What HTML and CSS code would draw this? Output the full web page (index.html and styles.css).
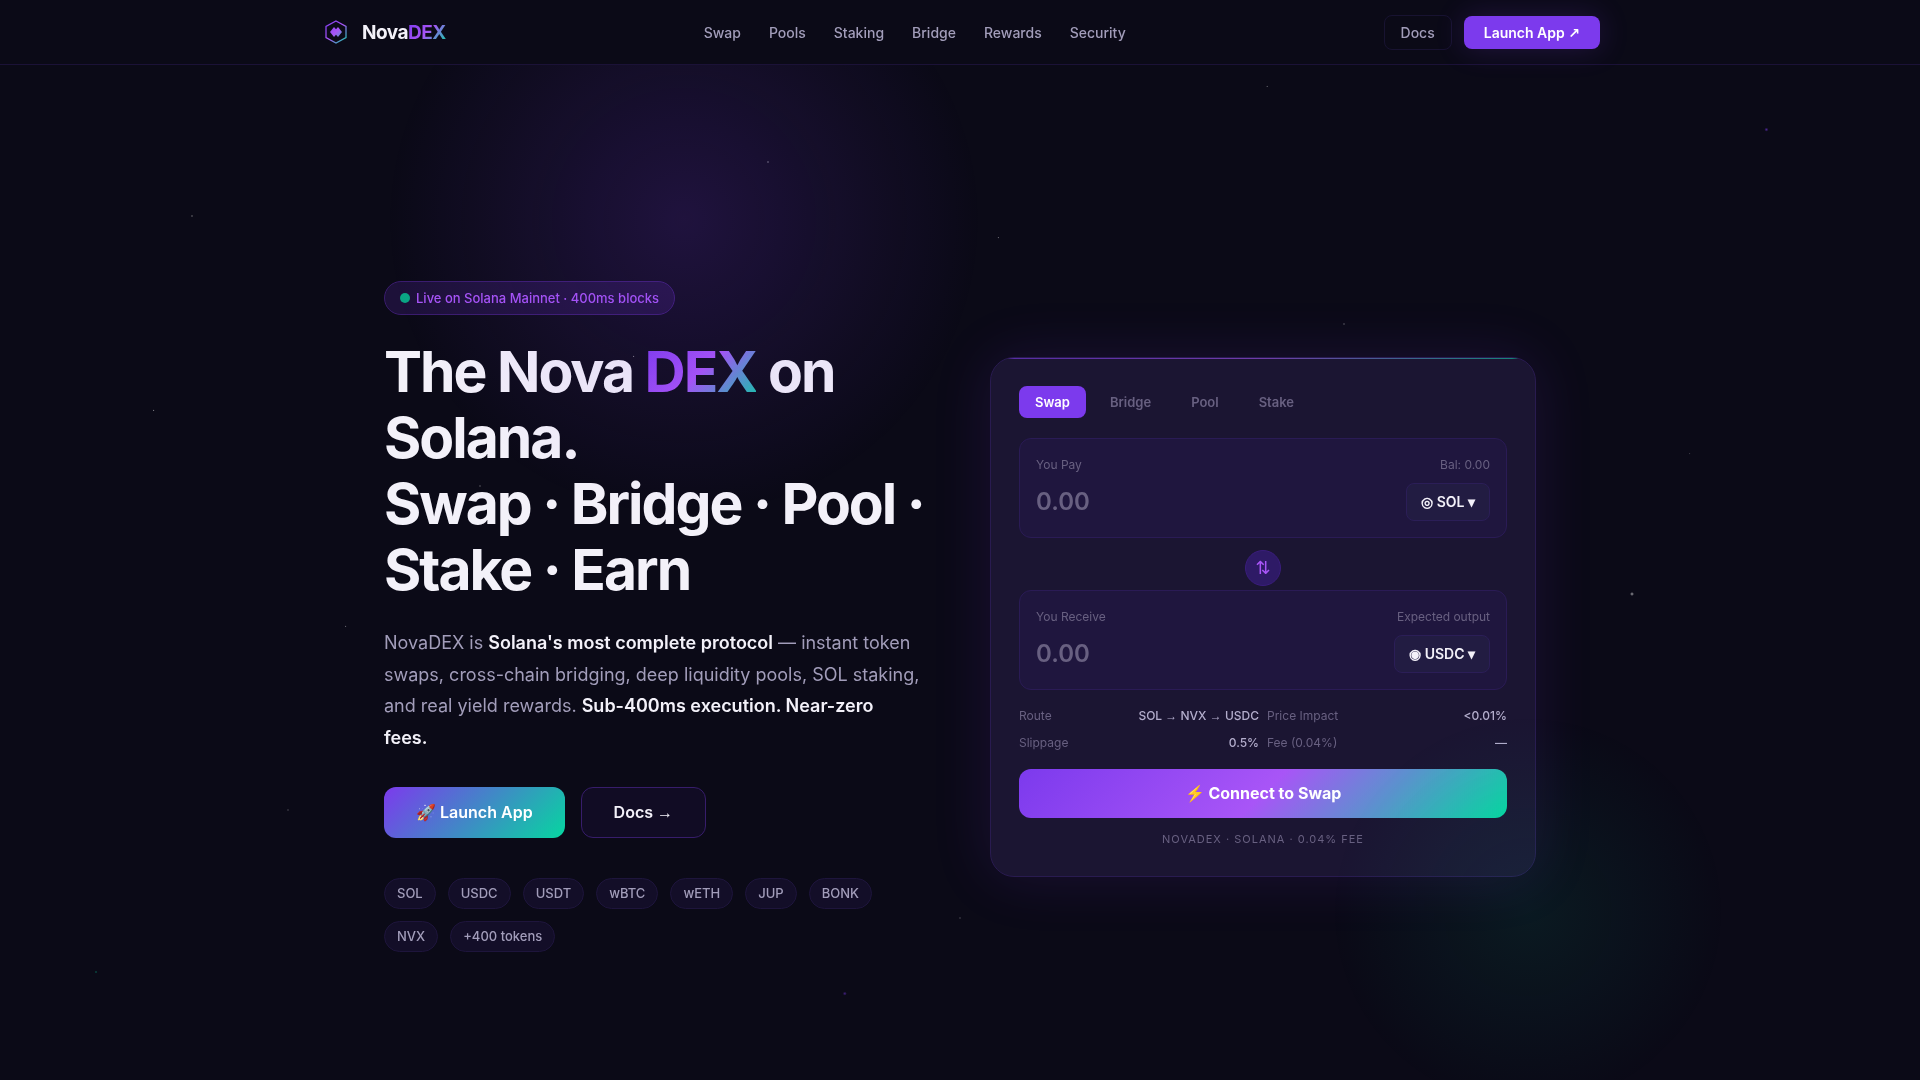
FILE: index.html
```
<!DOCTYPE html>
<html lang="en">
<head>
  <meta charset="UTF-8">
  <meta name="viewport" content="width=device-width, initial-scale=1">
  <title>NovaDEX</title>
  <link rel="stylesheet" href="styles.css">
</head>
<body>
  <!-- Background -->
  <div class="stars"></div>
  <div class="orb orb-purple"></div>
  <div class="orb orb-green"></div>

  <!-- Navigation -->
  <header class="nav">
    <div class="nav-inner">
      <a class="logo" href="#">
        <svg width="32" height="32" viewBox="0 0 32 32" fill="none" aria-hidden="true">
          <defs>
            <linearGradient id="logoGrad" x1="5" y1="5" x2="27" y2="27" gradientUnits="userSpaceOnUse">
              <stop offset="0" stop-color="#7c3aed"/>
              <stop offset="0.5" stop-color="#a855f7"/>
              <stop offset="1" stop-color="#06d6a0"/>
            </linearGradient>
          </defs>
          <path d="M16 5l10 5.500v11L16 27 6 21.500v-11z" stroke="url(#logoGrad)" stroke-width="1.300"/>
          <path d="M10 16l4-5 2 2.200 2-2.200 4 5-4 5-2-2.200-2 2.200z" fill="url(#logoGrad)"/>
        </svg>
        <span>Nova<span class="grad">DEX</span></span>
      </a>
      <nav class="nav-links">
        <a href="#swap">Swap</a>
        <a href="#pools">Pools</a>
        <a href="#staking">Staking</a>
        <a href="#bridge">Bridge</a>
        <a href="#rewards">Rewards</a>
        <a href="#security">Security</a>
      </nav>
      <div class="nav-actions">
        <a class="btn-ghost" href="#docs">Docs</a>
        <a class="btn-nav" href="#app">Launch App <span class="arrow-out">↗</span></a>
      </div>
    </div>
  </header>

  <!-- Hero -->
  <main class="hero">
    <section class="hero-copy">
      <div class="badge"><span class="dot"></span>Live on Solana Mainnet · 400ms blocks</div>
      <h1>The Nova <span class="grad">DEX</span> on Solana.<br>Swap · Bridge · Pool · Stake · Earn</h1>
      <p class="lead">NovaDEX is <strong>Solana's most complete protocol</strong> — instant token swaps, cross-chain bridging, deep liquidity pools, SOL staking, and real yield rewards. <strong>Sub-400ms execution. Near-zero<br>fees.</strong></p>
      <div class="cta">
        <a class="btn-primary" href="#app">🚀 Launch App</a>
        <a class="btn-outline" href="#docs">Docs <span class="arrow">→</span></a>
      </div>
      <ul class="tokens">
        <li>SOL</li>
        <li>USDC</li>
        <li>USDT</li>
        <li>wBTC</li>
        <li>wETH</li>
        <li>JUP</li>
        <li>BONK</li>
        <li>NVX</li>
        <li>+400 tokens</li>
      </ul>
    </section>

    <!-- Swap card -->
    <section class="card" id="swap">
      <div class="tabs">
        <button class="tab active" type="button">Swap</button>
        <button class="tab" type="button">Bridge</button>
        <button class="tab" type="button">Pool</button>
        <button class="tab" type="button">Stake</button>
      </div>
      <div class="field">
        <div class="field-top">
          <label for="pay">You Pay</label>
          <span>Bal: 0.00</span>
        </div>
        <div class="field-row">
          <input id="pay" type="text" inputmode="decimal" placeholder="0.00">
          <button class="token" type="button">◎ SOL ▾</button>
        </div>
      </div>
      <button class="flip" type="button" aria-label="Switch tokens">⇅</button>
      <div class="field">
        <div class="field-top">
          <label for="receive">You Receive</label>
          <span>Expected output</span>
        </div>
        <div class="field-row">
          <input id="receive" type="text" placeholder="0.00" readonly>
          <button class="token" type="button">◉ USDC ▾</button>
        </div>
      </div>
      <dl class="info">
        <div><dt>Route</dt><dd>SOL <span class="arrow">→</span> NVX <span class="arrow">→</span> USDC</dd></div>
        <div><dt>Price Impact</dt><dd>&lt;0.01%</dd></div>
        <div><dt>Slippage</dt><dd>0.5%</dd></div>
        <div><dt>Fee (0.04%)</dt><dd>—</dd></div>
      </dl>
      <button class="connect" type="button">⚡ Connect to Swap</button>
      <p class="card-note">NovaDEX · Solana · 0.04% fee</p>
    </section>
  </main>
</body>
</html>
```
FILE: styles.css
```
:root {
  --bg: #0b0a17;
  --purple: #7c3aed;
  --violet: #a855f7;
  --green: #06d6a0;
  --text: #f3f1f9;
  --muted: #a29dba;
  --dim: #686081;
  --grad: linear-gradient(135deg, #7c3aed 0%, #a855f7 50%, #06d6a0 100%);
}

* {
  box-sizing: border-box;
  margin: 0;
  padding: 0;
}

body {
  min-height: 100vh;
  background: var(--bg);
  color: var(--text);
  font-family: 'Inter', sans-serif;
  overflow-x: hidden;
}

a {
  color: inherit;
  text-decoration: none;
}

button,
input {
  font-family: inherit;
  border: none;
}

button {
  cursor: pointer;
}

.grad {
  background: var(--grad);
  -webkit-background-clip: text;
  background-clip: text;
  color: transparent;
}

.arrow {
  font-family: 'Liberation Sans', sans-serif;
}

.arrow-out {
  font-family: 'DejaVu Sans', sans-serif;
  line-height: 1;
}

/* Background */
.stars {
  position: fixed;
  inset: 0;
  pointer-events: none;
  background:
    radial-gradient(1px 1px at 10% 20%, rgba(255, 255, 255, 0.6), transparent),
    radial-gradient(1px 1px at 8% 38%, rgba(255, 255, 255, 0.5), transparent),
    radial-gradient(1px 1px at 40% 15%, rgba(255, 255, 255, 0.7), transparent),
    radial-gradient(1px 1px at 66% 8%, rgba(255, 255, 255, 0.4), transparent),
    radial-gradient(2px 2px at 92% 12%, rgba(124, 58, 237, 0.6), transparent),
    radial-gradient(1px 1px at 52% 22%, rgba(255, 255, 255, 0.4), transparent),
    radial-gradient(1px 1px at 70% 30%, rgba(255, 255, 255, 0.5), transparent),
    radial-gradient(1px 1px at 88% 42%, rgba(255, 255, 255, 0.2), transparent),
    radial-gradient(2px 2px at 85% 55%, rgba(255, 255, 255, 0.6), transparent),
    radial-gradient(1px 1px at 18% 58%, rgba(255, 255, 255, 0.4), transparent),
    radial-gradient(1px 1px at 15% 75%, rgba(255, 255, 255, 0.4), transparent),
    radial-gradient(1px 1px at 5% 90%, rgba(6, 214, 160, 0.7), transparent),
    radial-gradient(2px 2px at 44% 92%, rgba(124, 58, 237, 0.5), transparent),
    radial-gradient(1px 1px at 50% 85%, rgba(255, 255, 255, 0.4), transparent),
    radial-gradient(1px 1px at 33% 33%, rgba(255, 255, 255, 0.5), transparent),
    radial-gradient(1px 1px at 25% 45%, rgba(255, 255, 255, 0.5), transparent);
}

.orb {
  position: fixed;
  z-index: 2;
  border-radius: 50%;
  pointer-events: none;
}

.orb-purple {
  top: -80px;
  left: 20%;
  width: 600px;
  height: 600px;
  background: radial-gradient(circle, rgba(124, 58, 237, 0.18), transparent 70%);
}

.orb-green {
  right: 10%;
  bottom: -32px;
  width: 400px;
  height: 400px;
  background: radial-gradient(circle, rgba(6, 214, 160, 0.08), transparent 70%);
}

/* Navigation */
.nav {
  position: relative;
  z-index: 3;
  border-bottom: 1px solid #1b1237;
  background: var(--bg);
}

.nav-inner {
  display: flex;
  align-items: center;
  justify-content: space-between;
  max-width: 1280px;
  height: 64px;
  margin: 0 auto;
}

.logo {
  display: flex;
  align-items: center;
  gap: 10px;
  font-size: 19px;
  font-weight: 700;
  letter-spacing: -0.5px;
}

.nav-links {
  display: flex;
  gap: 28px;
  color: var(--muted);
  font-size: 14px;
  font-weight: 500;
}

.nav-actions {
  display: flex;
  align-items: center;
  justify-content: flex-end;
  gap: 12px;
  font-size: 14px;
  line-height: 17px;
}

.btn-ghost {
  padding: 8px 16px;
  border: 1px solid #181331;
  border-radius: 8px;
  color: var(--muted);
  font-weight: 500;
}

.btn-nav {
  padding: 8px 20px;
  border-radius: 8px;
  background: var(--purple);
  box-shadow: 0 0 30px rgba(124, 58, 237, 0.2);
  color: #fff;
  font-weight: 600;
}

/* Hero */
.hero {
  position: relative;
  display: grid;
  grid-template-columns: 1fr 1fr;
  align-items: center;
  gap: 60px;
  max-width: 1280px;
  margin: 0 auto;
  padding: 216px 64px 120px;
}

.badge {
  display: inline-flex;
  align-items: center;
  gap: 6px;
  height: 34px;
  padding: 0 15px;
  border: 1px solid #3a1c6e;
  border-radius: 20px;
  background: rgba(124, 58, 237, 0.16);
  color: var(--violet);
  font-size: 13px;
  font-weight: 500;
}

.dot {
  width: 10px;
  height: 10px;
  border-radius: 50%;
  background: #0ba584;
}

h1 {
  margin: 24px 0;
  font-size: 57px;
  font-weight: 700;
  line-height: 66px;
  letter-spacing: -2px;
}

.lead {
  color: var(--muted);
  font-size: 18px;
  line-height: 1.75;
}

.lead strong {
  color: var(--text);
  font-weight: 600;
}

.cta {
  display: flex;
  gap: 16px;
  margin: 34px 0 40px;
  font-size: 16px;
  font-weight: 600;
  line-height: 20px;
}

.btn-primary {
  padding: 15px 32px;
  border-radius: 12px;
  background: linear-gradient(135deg, #7c3aed, #06d6a0);
  color: #fff;
}

.btn-outline {
  padding: 14px 32px;
  border: 1px solid #371d6b;
  border-radius: 12px;
  background: #110c24;
}

.tokens {
  display: flex;
  flex-wrap: wrap;
  gap: 12px;
  list-style: none;
}

.tokens li {
  padding: 6px 12px;
  border: 1px solid #1e153c;
  border-radius: 20px;
  background: #130e28;
  color: var(--muted);
  font-size: 13px;
  font-weight: 500;
  line-height: 17px;
}

/* Swap card */
.card {
  position: relative;
  overflow: hidden;
  padding: 28px;
  border: 1px solid #291b50;
  border-radius: 24px;
  background: #1b1532;
  box-shadow: 0 0 60px rgba(124, 58, 237, 0.14);
}

.card::before {
  content: '';
  position: absolute;
  top: 0;
  left: 0;
  right: 0;
  height: 1px;
  background: var(--grad);
  opacity: 0.6;
}

.tabs {
  display: flex;
  gap: 8px;
  margin-bottom: 20px;
}

.tab {
  padding: 8px 16px;
  border-radius: 8px;
  background: none;
  color: var(--dim);
  font-size: 13px;
  font-weight: 600;
  line-height: 16px;
}

.tab.active {
  background: var(--purple);
  color: #fff;
}

.field {
  padding: 16px;
  border: 1px solid #2a1b55;
  border-radius: 12px;
  background: #1f163e;
}

.field-top {
  display: flex;
  justify-content: space-between;
  margin-bottom: 8px;
  color: var(--dim);
  font-size: 12px;
  line-height: 20px;
}

.field-row {
  display: flex;
  align-items: center;
  justify-content: space-between;
  height: 38px;
}

.field-row input {
  flex: 1;
  min-width: 0;
  background: none;
  outline: none;
  color: var(--text);
  font-size: 24px;
  font-weight: 600;
}

.field-row input::placeholder {
  color: var(--dim);
}

.token {
  padding: 9px 14px;
  border: 1px solid #2b1e57;
  border-radius: 8px;
  background: #221c42;
  color: var(--text);
  font-size: 14px;
  font-weight: 600;
  line-height: 18px;
}

.flip {
  display: block;
  width: 36px;
  height: 36px;
  margin: 12px auto 4px;
  border: 1px solid #3a1d7c;
  border-radius: 50%;
  background: #2e1a66;
  color: var(--violet);
  font-family: 'DejaVu Sans', sans-serif;
  font-size: 18px;
}

.info {
  display: grid;
  grid-template-columns: 1fr 1fr;
  gap: 7px 8px;
  margin: 16px 0;
  font-size: 12px;
  line-height: 20px;
}

.info div {
  display: flex;
  justify-content: space-between;
}

.info dt {
  color: var(--dim);
}

.info dd {
  color: #b3adcc;
  font-weight: 500;
}

.connect {
  width: 100%;
  padding: 14px;
  border-radius: 12px;
  background: var(--grad);
  color: #fff;
  font-size: 16px;
  font-weight: 700;
  line-height: 21px;
}

.card-note {
  margin-top: 12px;
  color: var(--dim);
  font-size: 11px;
  letter-spacing: 1px;
  line-height: 18px;
  text-align: center;
  text-transform: uppercase;
}
```
